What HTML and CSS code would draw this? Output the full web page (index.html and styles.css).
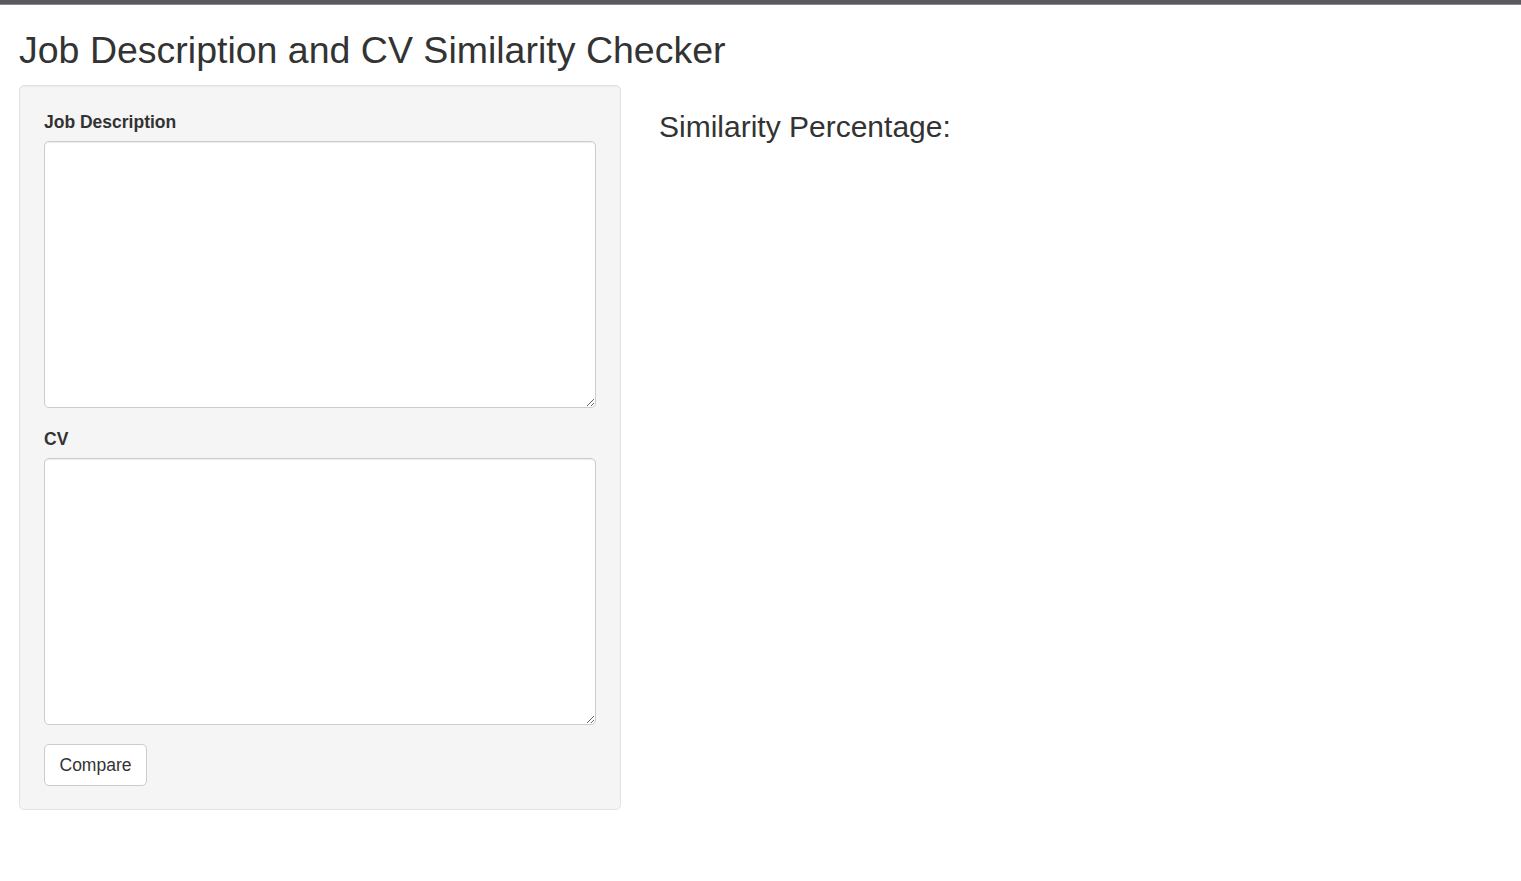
FILE: index.html
```html
<!DOCTYPE html>
<html>
<head>
<meta charset="utf-8">
<title>Job Description and CV Similarity Checker</title>
<link rel="stylesheet" href="styles.css">
</head>
<body>
<div class="topbar"></div>
<div class="container">
  <h2 class="title">Job Description and CV Similarity Checker</h2>
  <div class="row">
    <div class="well">
      <div class="form-group">
        <label class="label" for="jd">Job Description</label>
        <textarea id="jd" class="textarea"></textarea>
      </div>
      <div class="form-group">
        <label class="label" for="cv">CV</label>
        <textarea id="cv" class="textarea"></textarea>
      </div>
      <button class="btn" type="button">Compare</button>
    </div>
    <div class="main">
      <h3 class="result">Similarity Percentage:</h3>
    </div>
  </div>
</div>
</body>
</html>
```
FILE: styles.css
```css
* { box-sizing: border-box; }
html, body { margin: 0; padding: 0; background: #fff; }
body {
  font-family: "Liberation Sans", Arial, Helvetica, sans-serif;
  font-size: 17.5px;
  line-height: 1.42857;
  color: #333;
}
.topbar {
  height: 5px;
  background: #5a5a5e;
  border-bottom: 1px solid #8a8a8e;
}
.container {
  padding: 0 19px;
}
.title {
  font-size: 37.5px;
  font-weight: 400;
  line-height: 1.1;
  margin: 25px 0 14px 0;
}
.row {
  display: flex;
  align-items: flex-start;
  gap: 38px;
}
.well {
  width: 602px;
  flex: none;
  background: #f5f5f5;
  border: 1px solid #e3e3e3;
  border-radius: 5px;
  box-shadow: inset 0 1px 1px rgba(0,0,0,.05);
  padding: 24px 24px 23px 24px;
}
.form-group {
  margin-bottom: 19px;
}
.label {
  display: block;
  font-weight: 700;
  font-size: 17.5px;
  line-height: 25px;
  margin-bottom: 6px;
}
.textarea {
  display: block;
  width: 552px;
  height: 267px;
  border: 1px solid #ccc;
  border-radius: 5px;
  background: #fff;
  box-shadow: inset 0 1px 1px rgba(0,0,0,.075);
  font-family: inherit;
  font-size: 17.5px;
  padding: 7px 15px;
  resize: vertical;
  margin: 0;
}
.btn {
  display: block;
  width: 103px;
  height: 42px;
  padding: 0;
  font-family: inherit;
  font-size: 17.5px;
  color: #333;
  background: #fff;
  border: 1px solid #ccc;
  border-radius: 5px;
  cursor: pointer;
}
.main {
  flex: 1;
}
.result {
  font-size: 30px;
  font-weight: 400;
  line-height: 1.1;
  margin: 25px 0 0 0;
}
```
